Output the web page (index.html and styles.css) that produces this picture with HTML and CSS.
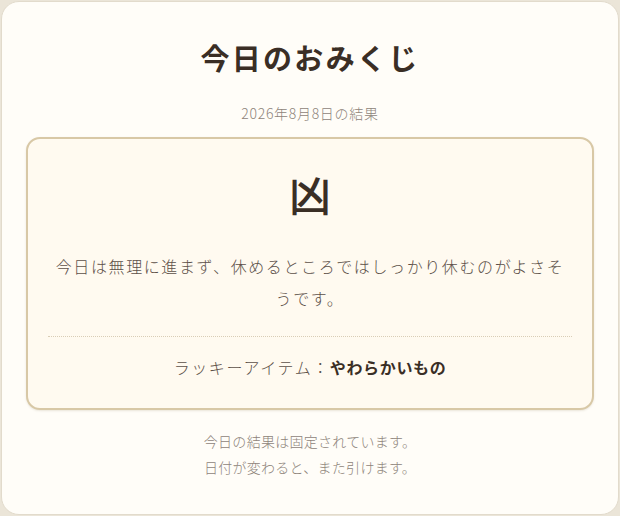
FILE: index.html
```html
<!DOCTYPE html>
<html lang="ja">
<head>
<meta charset="UTF-8" />
<meta name="viewport" content="width=device-width, initial-scale=1" />
<title>今日のおみくじ</title>
<link rel="stylesheet" href="styles.css">
</head>
<body>
<main class="omikuji">
  <h1 class="title">今日のおみくじ</h1>
  <p class="date">2026年8月8日の結果</p>

  <section class="result">
    <div class="fortune">凶</div>
    <p class="message">今日は無理に進まず、休めるところではしっかり休むのがよさそうです。</p>
    <p class="lucky">ラッキーアイテム：<strong>やわらかいもの</strong></p>
  </section>

  <p class="note">今日の結果は固定されています。<br>日付が変わると、また引けます。</p>
</main>
</body>
</html>
```

FILE: styles.css
```css
:root {
  --page-bg: #ebe5d8;
  --card-bg: #fffdf8;
  --card-border: #e2dbcc;
  --box-bg: #fffaf0;
  --box-border: #d8c8a6;
  --ink: #3a2e25;
  --ink-soft: #5c5048;
  --muted: #8e847a;
  --font: "Noto Sans CJK JP", "Noto Sans", sans-serif;
}

* {
  box-sizing: border-box;
}

body {
  margin: 0;
  padding: 1px;
  background: var(--page-bg);
  font-family: var(--font);
  color: var(--ink);
}

.omikuji {
  background: var(--card-bg);
  border: 1px solid var(--card-border);
  border-radius: 18px;
  padding: 24px 24px 34px;
  text-align: center;
}

.title {
  margin: 10px 0 0;
  font-size: 29px;
  font-weight: 700;
  letter-spacing: 0.08em;
  line-height: 42px;
}

.date {
  margin: 25px 0 0;
  font-size: 14px;
  font-weight: 300;
  letter-spacing: 0.05em;
  color: var(--muted);
  line-height: 20px;
}

.result {
  margin-top: 14px;
  background: var(--box-bg);
  border: 2px solid var(--box-border);
  border-radius: 14px;
  padding: 26px 20px 27px;
  box-shadow: 0 1px 2px rgba(120, 100, 60, 0.15);
}

.fortune {
  font-size: 42px;
  font-weight: 500;
  line-height: 58px;
}

.message {
  margin: 27px 0 0;
  font-size: 16px;
  font-weight: 300;
  line-height: 32px;
  letter-spacing: 0.1em;
  color: var(--ink-soft);
}

.lucky {
  margin: 22px 0 0;
  padding-top: 16px;
  border-top: 1px dotted #d9cdb6;
  font-size: 16px;
  font-weight: 300;
  line-height: 28px;
  letter-spacing: 0.1em;
  color: var(--ink-soft);
}

.lucky strong {
  font-weight: 700;
  color: var(--ink);
  letter-spacing: 0.04em;
}

.note {
  margin: 18px 0 0;
  font-size: 14px;
  font-weight: 300;
  line-height: 26px;
  letter-spacing: 0.02em;
  color: var(--muted);
}
```
